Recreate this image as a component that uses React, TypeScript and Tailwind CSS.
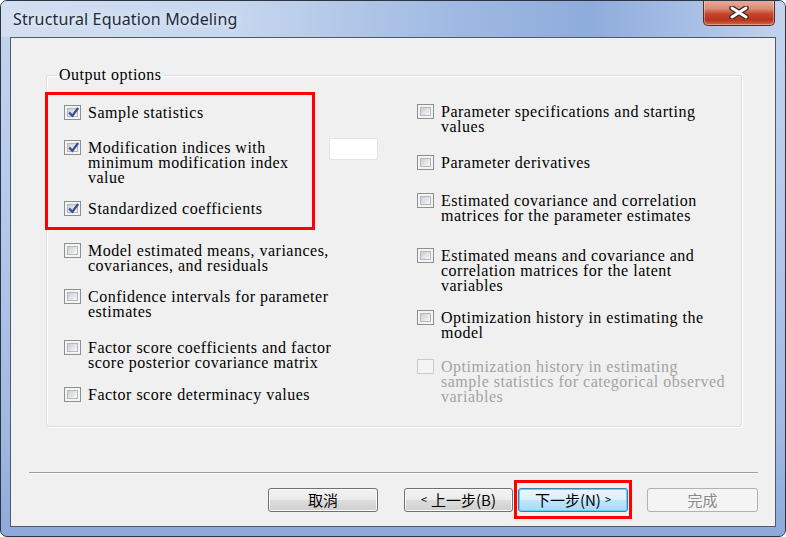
import React from "react";

function Box({ checked, disabled }: { checked?: boolean; disabled?: boolean }) {
  if (disabled) {
    return <div className="w-[17px] h-[15px] shrink-0 border border-[#cacaca] bg-[#f4f4f4]" />;
  }
  return (
    <div className="relative w-[17px] h-[15px] shrink-0 border border-[#8e8f8f] bg-[#f4f4f4] p-[2px]">
      <div className="w-full h-full border border-[#b4b8bd] bg-[linear-gradient(135deg,#c9cdd3_0%,#e3e5e8_55%,#f8f8f8_100%)]" />
      {checked && (
        <svg className="absolute left-[1px] top-[-1px]" width="15" height="15" viewBox="0 0 15 15">
          <path d="M3.2 7.6 L6.4 10.8 L12.2 3" fill="none" stroke="#3b4f92" strokeWidth="2.3" />
        </svg>
      )}
    </div>
  );
}

function Row({
  lines,
  checked,
  disabled,
  className = "",
}: {
  lines: string[];
  checked?: boolean;
  disabled?: boolean;
  className?: string;
}) {
  return (
    <div className={`flex items-start gap-[7px] ${className}`}>
      <Box checked={checked} disabled={disabled} />
      <div className={`leading-[15px] ${disabled ? "text-[#a3a3a3]" : "text-black"}`}>
        {lines.map((l) => (
          <div key={l} className="whitespace-nowrap">
            {l}
          </div>
        ))}
      </div>
    </div>
  );
}

function Btn({
  children,
  className = "",
  variant = "normal",
}: {
  children: React.ReactNode;
  className?: string;
  variant?: "normal" | "default" | "disabled";
}) {
  const base =
    "h-[24px] rounded-[3px] flex items-center justify-center text-[15px] [font-family:Noto_Sans_CJK_TC,sans-serif] leading-none";
  const v =
    variant === "disabled"
      ? "border border-[#adb2b5] bg-[#f4f4f4] text-[#8a8a8a]"
      : variant === "default"
      ? "border border-[#3c7fb1] bg-[linear-gradient(180deg,#eaf6fd_0%,#d9f0fc_50%,#bee6fd_51%,#a7d9f5_100%)] shadow-[inset_0_0_0_1px_#5fd2f7] text-black"
      : "border border-[#707070] bg-[linear-gradient(180deg,#f2f2f2_0%,#ebebeb_50%,#dddddd_51%,#cfcfcf_100%)] shadow-[inset_0_0_0_1px_#fcfcfc] text-black";
  return <div className={`${base} ${v} ${className}`}>{children}</div>;
}

export default function App() {
  return (
    <div className="w-[786px] h-[537px] flex flex-col rounded-[7px] border border-[#2c3642] overflow-hidden bg-[linear-gradient(180deg,#c3d4ed_0%,#b5c9ea_40%,#a0b9e2_80%,#8ea9da_100%)]">
      {/* title bar */}
      <div className="h-[36px] shrink-0 flex bg-[linear-gradient(90deg,#d3dff1_0%,#c6d6ee_30%,#9fb9e2_58%,#8eacdc_75%,#abc2e7_90%,#c2d3ed_100%)]">
        <div className="ml-[12px] mt-[8px] h-[20px] leading-[20px] text-[16px] tracking-[0.15px] text-[#1d2b3c] [font-family:Noto_Sans,sans-serif] [text-shadow:0_0_8px_rgba(255,255,255,0.95)]">
          Structural Equation Modeling
        </div>
        <div className="ml-auto mr-[10px] mt-[-1px] w-[72px] h-[26px] self-start rounded-b-[5px] border border-t-0 border-[#5a2a22] bg-[linear-gradient(180deg,#eab0a2_0%,#dc8a75_35%,#c7472f_55%,#b9331e_80%,#d06a4c_100%)] shadow-[inset_0_0_0_1px_rgba(255,255,255,0.35)] flex items-center justify-center">
          <svg width="22" height="13" viewBox="0 0 22 13">
            <path d="M4 2 L18 11 M18 2 L4 11" stroke="#3b2420" strokeWidth="5.5" strokeLinecap="round" />
            <path d="M4 2 L18 11 M18 2 L4 11" stroke="#ffffff" strokeWidth="3" strokeLinecap="round" />
          </svg>
        </div>
      </div>

      {/* body */}
      <div className="flex-1 px-[9px] pb-[9px] flex">
        <div className="flex-1 border border-[#4f5a68] bg-[#f0f0f0] flex flex-col [font-family:Liberation_Serif,serif] text-[16px] tracking-[0.5px]">
          <fieldset className="mt-[29px] ml-[35px] w-[696px] h-[360px] border border-[#d5dfe5] rounded-[3px] shadow-[inset_1px_1px_0_#ffffff,1px_1px_0_#ffffff] p-0 m-0">
            <legend className="ml-[10px] px-[2px] leading-[16px] text-black">Output options</legend>
            <div className="flex">
              {/* left column */}
              <div className="w-[370px]">
                <div className="flex items-start mt-[9px]">
                  <div className="ml-[-2px] w-[270px] border-[3px] border-[#ff0000] pl-[16px] pt-[10px] pb-[11px]">
                    <Row checked lines={["Sample statistics"]} />
                    <Row
                      checked
                      className="mt-[20px]"
                      lines={["Modification indices with", "minimum modification index", "value"]}
                    />
                    <Row checked className="mt-[16px]" lines={["Standardized coefficients"]} />
                  </div>
                  <div className="ml-[14px] mt-[46px] w-[49px] h-[22px] bg-white border border-[#e0e2e8] rounded-[2px]" />
                </div>
                <div className="pl-[17px]">
                  <Row className="mt-[13px]" lines={["Model estimated means, variances,", "covariances, and residuals"]} />
                  <Row className="mt-[16px]" lines={["Confidence intervals for parameter", "estimates"]} />
                  <Row
                    className="mt-[21px]"
                    lines={["Factor score coefficients and factor", "score posterior covariance matrix"]}
                  />
                  <Row className="mt-[17px]" lines={["Factor score determinacy values"]} />
                </div>
              </div>
              {/* right column */}
              <div className="flex-1">
                <Row className="mt-[21px]" lines={["Parameter specifications and starting", "values"]} />
                <Row className="mt-[21px]" lines={["Parameter derivatives"]} />
                <Row
                  className="mt-[23px]"
                  lines={["Estimated covariance and correlation", "matrices for the parameter estimates"]}
                />
                <Row
                  className="mt-[25px]"
                  lines={["Estimated means and covariance and", "correlation matrices for the latent", "variables"]}
                />
                <Row className="mt-[17px]" lines={["Optimization history in estimating the", "model"]} />
                <Row
                  disabled
                  className="mt-[19px]"
                  lines={["Optimization history in estimating", "sample statistics for categorical observed", "variables"]}
                />
              </div>
            </div>
          </fieldset>

          {/* separator */}
          <div className="mt-[45px] ml-[18px] mr-[17px] h-[2px] border-t border-t-[#a0a0a0] border-b border-b-white" />

          {/* buttons */}
          <div className="mt-[6px] flex items-center justify-end pr-[17px] tracking-normal">
            <Btn className="w-[110px] mr-[26px]">取消</Btn>
            <Btn className="w-[109px]">
              <span className="text-[11px] mr-[4px]">&lt;</span>
              <span>上一步(B)</span>
            </Btn>
            <div className="ml-[1px] h-[39px] border-[3px] border-[#ff0000] px-[1px] flex items-center">
              <Btn variant="default" className="w-[110px]">
                <span>下一步(N)</span>
                <span className="text-[11px] ml-[4px]">&gt;</span>
              </Btn>
            </div>
            <Btn variant="disabled" className="ml-[15px] w-[111px]">
              完成
            </Btn>
          </div>
        </div>
      </div>
    </div>
  );
}
